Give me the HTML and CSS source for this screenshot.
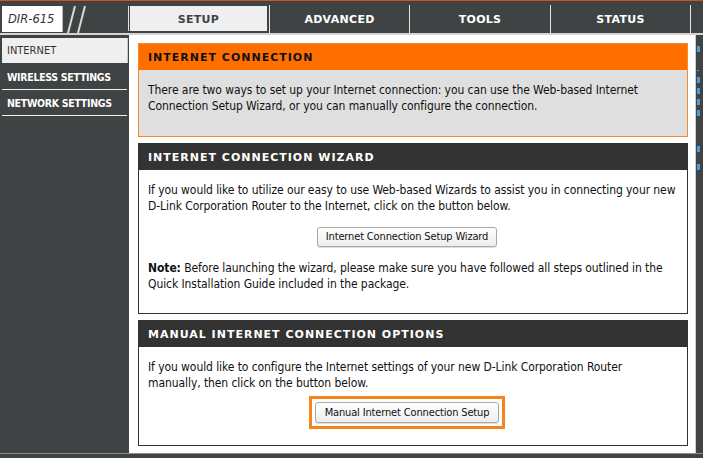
FILE: index.html
```html
<!DOCTYPE html>
<html>
<head>
<meta charset="utf-8">
<link rel="stylesheet" href="styles.css">
</head>
<body>
<div class="page">
  <header class="topbar">
    <div class="brand">
      <div class="logo">DIR-615</div>
      <svg class="slashes" width="24" height="27" viewBox="0 0 24 27">
        <line x1="3" y1="27" x2="10" y2="0" stroke="#d8d8d8" stroke-width="2"/>
        <line x1="13" y1="27" x2="20" y2="0" stroke="#d8d8d8" stroke-width="2"/>
      </svg>
    </div>
    <nav class="tabs">
      <div class="tab active">SETUP</div>
      <div class="tab">ADVANCED</div>
      <div class="tab">TOOLS</div>
      <div class="tab">STATUS</div>
    </nav>
    <div class="stub"></div>
  </header>
  <div class="rule"></div>
  <div class="main-row">
    <aside class="sidebar">
      <div class="side-item selected">INTERNET</div>
      <div class="side-item">WIRELESS SETTINGS</div>
      <div class="side-item">NETWORK SETTINGS</div>
    </aside>
    <main class="content">
      <section class="box box-orange">
        <h2 class="box-title">INTERNET CONNECTION</h2>
        <div class="box-body">
          <p>There are two ways to set up your Internet connection: you can use the Web-based Internet<br>Connection Setup Wizard, or you can manually configure the connection.</p>
        </div>
      </section>
      <section class="box box-dark">
        <h2 class="box-title">INTERNET CONNECTION WIZARD</h2>
        <div class="box-body">
          <p>If you would like to utilize our easy to use Web-based Wizards to assist you in connecting your new<br>D-Link Corporation Router to the Internet, click on the button below.</p>
          <div class="btn-row"><button class="btn btn-wizard">Internet Connection Setup Wizard</button></div>
          <p><b>Note:</b> Before launching the wizard, please make sure you have followed all steps outlined in the<br>Quick Installation Guide included in the package.</p>
        </div>
      </section>
      <section class="box box-dark box-last">
        <h2 class="box-title">MANUAL INTERNET CONNECTION OPTIONS</h2>
        <div class="box-body">
          <p>If you would like to configure the Internet settings of your new D-Link Corporation Router<br>manually, then click on the button below.</p>
          <div class="btn-row"><span class="highlight"><button class="btn btn-manual">Manual Internet Connection Setup</button></span></div>
        </div>
      </section>
    </main>
    <aside class="hints">
      <span class="mark m1"></span>
      <span class="mark m2"></span>
      <span class="mark m3"></span>
      <span class="mark m4"></span>
      <span class="mark m5"></span>
      <span class="mark m6"></span>
      <span class="mark m7"></span>
      <span class="mark m8"></span>
    </aside>
  </div>
  <div class="footer"></div>
</div>
</body>
</html>
```

FILE: styles.css
```css
html, body {
  margin: 0;
  padding: 0;
  background: #404343;
  overflow: hidden;
}
.page {
  width: 703px;
  height: 458px;
  background: #404343;
  border-top: 1px solid #c9561d;
  box-sizing: border-box;
  display: flex;
  flex-direction: column;
  font-family: "DejaVu Sans Condensed", "DejaVu Sans", sans-serif;
}
.topbar {
  display: flex;
  height: 29px;
  margin-top: 4px;
}
.brand {
  width: 129px;
  display: flex;
  align-items: flex-start;
}
.logo {
  margin-left: 2px;
  margin-top: 1px;
  width: 60px;
  height: 26px;
  background: #ffffff;
  box-shadow: 1px 0 0 #bbbbbb;
  font-family: "DejaVu Sans", sans-serif;
  font-style: italic;
  font-size: 11.5px;
  color: #333333;
  line-height: 26px;
  padding-left: 6px;
  box-sizing: border-box;
}
.slashes {
  margin-left: 3px;
  margin-top: 1px;
}
.tabs {
  display: flex;
}
.tab {
  width: 140px;
  border-left: 1px solid #e6e6e6;
  color: #ffffff;
  font-family: "DejaVu Sans", sans-serif;
  font-weight: bold;
  font-size: 11px;
  letter-spacing: 0.3px;
  padding-top: 1px;
  box-sizing: border-box;
  display: flex;
  align-items: center;
  justify-content: center;
}
.tab:nth-child(3) {
  width: 141px;
}
.tab.active {
  background: #efefef;
  color: #404343;
  margin-top: 1px;
  margin-bottom: 2px;
  margin-left: 1px;
  width: 137px;
  border-left: none;
  box-shadow: -1px 0 0 #404343, -2px 0 0 #e6e6e6;
  margin-right: 2px;
}
.stub {
  flex: 1;
  border-left: 1px solid #e6e6e6;
}
.rule {
  height: 2px;
  background: #d4d4d4;
}
.main-row {
  display: flex;
  flex: 1;
}
.sidebar {
  width: 129px;
  padding-top: 3px;
  padding-left: 2px;
  box-sizing: border-box;
}
.side-item {
  height: 25px;
  line-height: 26px;
  border-bottom: 1px solid #f0f0f0;
  margin-right: 2px;
  padding-left: 5px;
  color: #ffffff;
  font-weight: bold;
  font-size: 10.5px;
  letter-spacing: -0.3px;
}
.side-item.selected {
  background: #efefef;
  color: #333333;
  font-weight: normal;
  font-size: 11px;
  letter-spacing: 0;
  border-bottom: 1px solid #404343;
  margin-right: 1px;
  box-shadow: inset -1px 0 0 #c8c8c8;
}
.content {
  width: 566px;
  background: #ffffff;
  padding: 8px 7px 7px 9px;
  box-sizing: border-box;
  display: flex;
  flex-direction: column;
  gap: 6px;
}
.box {
  border: 1px solid #333333;
}
.box-title {
  margin: 0;
  height: 26px;
  line-height: 27px;
  padding-left: 9px;
  font-family: "DejaVu Sans", sans-serif;
  font-weight: bold;
  font-size: 11px;
  letter-spacing: 1px;
  background: #333333;
  color: #ffffff;
}
.box-orange {
  border-color: #f28a2e;
}
.box-orange .box-title {
  background: #ff6f00;
  color: #111111;
}
.box-orange .box-body {
  background: #dfdfdf;
  padding-bottom: 22px;
}
.box-body {
  padding: 12px 9px 21px 9px;
  font-size: 12px;
  line-height: 16px;
  letter-spacing: -0.08px;
  color: #111111;
  white-space: nowrap;
}
.box-body p {
  margin: 0;
}
.btn-row {
  display: flex;
  justify-content: center;
  margin: 13px 12px 13px 0;
}
.btn {
  font-family: "DejaVu Sans Condensed", "DejaVu Sans", sans-serif;
  font-size: 11px;
  letter-spacing: -0.15px;
  color: #111111;
  height: 20px;
  padding: 0 8px;
  border: 1px solid #a9a9a9;
  border-radius: 3px;
  background: linear-gradient(#ffffff, #ededed);
  box-shadow: 0 1px 1px rgba(0,0,0,0.15);
}
.btn-manual {
  height: 21px;
  padding: 0 9px;
}
.box-last .btn-row {
  margin: 5px 12px 0 0;
}
.box-last .box-body {
  padding-bottom: 16px;
}
.highlight {
  display: inline-flex;
  border: 3px solid #f7831f;
  padding: 3px 3px;
}
.hints {
  flex: 1;
  border-left: 1px solid #cfcfcf;
  display: flex;
  flex-direction: column;
  padding-top: 9px;
  padding-left: 1px;
}
.mark {
  display: block;
  width: 3px;
  height: 6px;
  background: #4d9ad8;
}
.m1 { margin-top: 2px; }
.m2 { margin-top: 18px; width: 2px; height: 1px; }
.m3 { margin-top: 6px; }
.m4 { margin-top: 5px; }
.m5 { margin-top: 5px; }
.m6 { margin-top: 5px; }
.m7 { margin-top: 30px; }
.m8 { margin-top: 12px; }
.footer {
  height: 6px;
  border-top: 1px solid #8c8c8c;
  box-sizing: border-box;
}
```
